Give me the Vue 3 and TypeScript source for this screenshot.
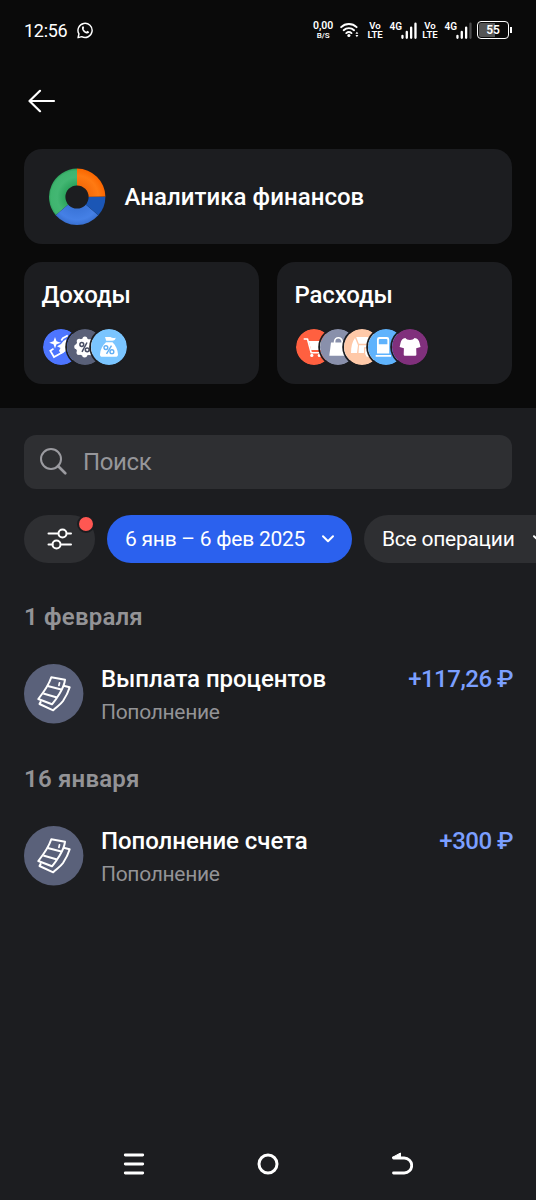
<script setup lang="ts">
interface Operation {
  date: string
  title: string
  kind: string
  amount: string
}

const operations: Operation[] = [
  { date: '1 февраля', title: 'Выплата процентов', kind: 'Пополнение', amount: '+117,26 ₽' },
  { date: '16 января', title: 'Пополнение счета', kind: 'Пополнение', amount: '+300 ₽' },
]
</script>

<template>
  <div class="screen">
    <div class="top">
      <div class="status">
        <span class="clock">12:56</span>
        <svg class="whatsapp" width="17" height="17" viewBox="0 0 16 16">
          <path d="M1 15l.9-3.6A6.9 6.9 0 1 1 4.600 14z" fill="none" stroke="#fff" stroke-width="1.400" stroke-linejoin="round" />
          <path d="M5.300 4.200c.5-.4 1-.3 1.200.2l.5 1.200-.7 1c.6 1.200 1.500 2 2.800 2.600l1-.9 1.500.8c.3.3.1 1-.3 1.400-1 .9-2.700.5-4.500-.8C5 8.300 4.200 5.500 5.300 4.200z" fill="#fff" />
        </svg>
        <div class="rate"><b>0,00</b><i>B/S</i></div>
        <svg class="wifi" width="20" height="16" viewBox="0 0 20 16">
          <g fill="none" stroke="#fff" stroke-width="2" stroke-linecap="round">
            <path d="M1.200 5a11.600 11.600 0 0 1 16 0" />
            <path d="M3.800 8.200a7.800 7.800 0 0 1 10.800 0" />
            <path d="M6.500 11.200a4 4 0 0 1 5.400 0" />
          </g>
          <circle cx="9.200" cy="13.700" r="1.600" fill="#fff" />
          <path d="M16 12l1.500-2.300L19 12zM16 13.200l1.500 2.300 1.500-2.300z" fill="#fff" />
        </svg>
        <div class="volte"><span>Vo</span><span>LTE</span></div>
        <span class="net">4G</span>
        <svg class="bars" width="17" height="17" viewBox="0 0 17 17">
          <path d="M1.500 14v2M6 10v6M10.500 5.500v10.500M15 1.500v14.500" stroke="#fff" stroke-width="2.400" stroke-linecap="round" />
        </svg>
        <div class="volte second"><span>Vo</span><span>LTE</span></div>
        <span class="net">4G</span>
        <svg class="bars" width="17" height="17" viewBox="0 0 17 17">
          <path d="M1.500 14v2M6 10v6M10.500 5.500v10.500" stroke="#fff" stroke-width="2.400" stroke-linecap="round" />
          <path d="M15 1.500v14.500" stroke="#4a4a4b" stroke-width="2.400" stroke-linecap="round" />
        </svg>
        <div class="battery"><span>55</span></div>
        <div class="battery-tip"></div>
      </div>

      <div class="nav">
        <svg width="28" height="24" viewBox="0 0 28 24">
          <path d="M26 12H1.500M12 1.800L1.500 12 12 22.200" fill="none" stroke="#fff" stroke-width="2.200" stroke-linecap="round" stroke-linejoin="round" />
        </svg>
      </div>

      <div class="card analytics">
        <svg width="58" height="58" viewBox="-29 -29 58 58">
          <defs>
            <radialGradient id="gGreen" gradientUnits="userSpaceOnUse" cx="0" cy="0" r="28.400">
              <stop offset=".4" stop-color="#2ba35c" /><stop offset=".7" stop-color="#43b773" /><stop offset=".92" stop-color="#3fb56f" /><stop offset="1" stop-color="#2a9c58" />
            </radialGradient>
            <radialGradient id="gBlue" gradientUnits="userSpaceOnUse" cx="0" cy="0" r="28.400">
              <stop offset=".4" stop-color="#3a74d8" /><stop offset=".8" stop-color="#4580e6" /><stop offset="1" stop-color="#386fd0" />
            </radialGradient>
            <radialGradient id="gOrange" gradientUnits="userSpaceOnUse" cx="0" cy="0" r="28.400">
              <stop offset=".4" stop-color="#f56a0a" /><stop offset=".75" stop-color="#ff7a12" /><stop offset="1" stop-color="#fa6600" />
            </radialGradient>
          </defs>
          <path d="M0 0V-28.400A28.400 28.400 0 0 0 -21.300 18.300z" fill="url(#gGreen)" />
          <path d="M0 0L-21.300 18.300A28.400 28.400 0 0 0 21.300 18.300z" fill="url(#gBlue)" />
          <path d="M0 0L21.300 18.300A28.400 28.400 0 0 0 28.400 -.6z" fill="#1b56b5" />
          <path d="M0 0L28.400 -.6A28.400 28.400 0 0 0 0 -28.400z" fill="url(#gOrange)" />
          <circle r="11.600" fill="#1c1d20" />
        </svg>
        <span>Аналитика финансов</span>
      </div>

      <div class="pair">
        <div class="card half">
          <h2>Доходы</h2>
          <div class="stack">
            <svg class="badge" viewBox="0 0 36 36">
              <circle cx="18" cy="18" r="18" fill="#4d75ff" />
              <path d="M12 8l1.500 4.200 4.500 1.500-4.500 1.500L12 19.500l-1.500-4.300L6.200 13.700l4.300-1.500z" fill="#fff" />
              <path d="M10.500 19.700l-3.200 2L11 28l9.500-5.200" fill="none" stroke="#fff" stroke-width="1.700" />
              <path d="M18.300 11.500l1.500-2.300 5-2.700" fill="none" stroke="#fff" stroke-width="1.700" />
              <path d="M20.500 12l3-2v11.700l-5.500 3.300-2-3.300 1.500-2.700-3.500-1.700 4-2.300z" fill="#fff" />
            </svg>
            <svg class="badge" viewBox="0 0 36 36">
              <circle cx="18" cy="18" r="18" fill="#596078" />
              <circle cx="17.700" cy="18" r="8.800" fill="#fff" />
              <circle cx="17.700" cy="18" r="7.960" fill="none" stroke="#fff" stroke-width="5" stroke-linecap="round" stroke-dasharray="0 6.251" />
              <g fill="none" stroke="#484e64" stroke-width="1.500"><circle cx="14.800" cy="15.500" r="1.900" /><circle cx="20.200" cy="20.800" r="1.900" /><path d="M20 13.500l-5 9.300" /></g>
            </svg>
            <svg class="badge" viewBox="0 0 36 36">
              <circle cx="18" cy="18" r="18" fill="#7ac5ff" />
              <path d="M14 8h5.500q2 1.700 5.200.7-.5 2.800-3.500 3.100h-6zM15 13.200h6.500c3.200 3.200 5.300 7.300 5.500 12.300 0 1.500-1 2.300-2.400 2.300H11.200c-1.400 0-2.300-1-2.200-2.400.2-5 2.600-9 6-12.200z" fill="#fff" />
              <g fill="none" stroke="#62aef2" stroke-width="1.400"><circle cx="14.900" cy="18.600" r="1.900" /><circle cx="20.900" cy="22.700" r="1.900" /><path d="M20.500 16.700l-5 8.200" /></g>
            </svg>
          </div>
        </div>
        <div class="card half">
          <h2>Расходы</h2>
          <div class="stack">
            <svg class="badge" viewBox="0 0 36 36">
              <circle cx="18" cy="18" r="18" fill="#ff6040" />
              <path d="M8.300 10h3.200l3.700 13.700h10" fill="none" stroke="#fff" stroke-width="1.600" stroke-linecap="round" stroke-linejoin="round" />
              <path d="M12.700 12h16l-2.600 9H15.200z" fill="#fff" />
              <circle cx="15.800" cy="26.400" r="1.600" fill="#fff" /><circle cx="23.300" cy="26.400" r="1.600" fill="#fff" />
            </svg>
            <svg class="badge" viewBox="0 0 36 36">
              <circle cx="18" cy="18" r="18" fill="#8990ab" />
              <path d="M11 13.500h14.500l1.600 13.200H9.300z" fill="#fff" />
              <path d="M14.600 15v-2.500a3.800 3.800 0 0 1 7.600 0V15" fill="none" stroke="#fff" stroke-width="1.600" />
            </svg>
            <svg class="badge" viewBox="0 0 36 36">
              <circle cx="18" cy="18" r="18" fill="#ffc9a8" />
              <path d="M12.200 8H24l2.500 6.800H14.800zM11 9l3 7.300-1 7.700H7c0-6 1.200-11.500 4-15zM15 16.200h11.500v2H20V24h-5.500zM21.200 19.500h5.500v8.200h-4L21.200 25z" fill="#fff" />
            </svg>
            <svg class="badge" viewBox="0 0 36 36">
              <circle cx="18" cy="18" r="18" fill="#5fb3fd" />
              <path fill-rule="evenodd" d="M11.200 8h7.800a2.200 2.200 0 0 1 2.200 2.200V24.500H9V10.200A2.200 2.200 0 0 1 11.200 8zM11.800 10a1 1 0 0 0-1 1v4.200h8.600V11a1 1 0 0 0-1-1z" fill="#fff" />
              <path d="M7.700 25.900h15.300v1.900H7.700z" fill="#fff" />
            </svg>
            <svg class="badge" viewBox="0 0 36 36">
              <circle cx="18" cy="18" r="18" fill="#80307c" />
              <path d="M13.400 9c1.200 2.500 7.900 2.500 9.100 0 3 .5 4.400 2.200 5 4.700l1 4.300-4.300 1.300.2 6.300q0 1.200-1.200 1.200H12.900q-1.200 0-1.200-1.200l.2-6.300L7.600 18l1-4.300c.6-2.500 1.900-4.200 4.800-4.700z" fill="#fff" />
            </svg>
          </div>
        </div>
      </div>
    </div>

    <div class="search">
      <svg width="30" height="30" viewBox="0 0 30 30">
        <circle cx="12" cy="12" r="10" fill="none" stroke="#9b9ba0" stroke-width="2" />
        <path d="M19 19l7.300 7.300" stroke="#9b9ba0" stroke-width="2.700" stroke-linecap="round" />
      </svg>
      <span>Поиск</span>
    </div>

    <div class="chips">
      <div class="chip filter">
        <svg width="26" height="24" viewBox="0 0 26 24">
          <g fill="none" stroke="#fff" stroke-width="2" stroke-linecap="round">
            <path d="M1.500 6.500h9M20 6.500h4M1.500 17.500h4M14.500 17.500H24" />
            <circle cx="15.500" cy="6.500" r="4" /><circle cx="9.500" cy="17.500" r="4" />
          </g>
        </svg>
        <i class="dot"></i>
      </div>
      <div class="chip active">
        <span>6 янв – 6 фев 2025</span>
        <svg width="14" height="10" viewBox="0 0 14 10"><path d="M2 2.200l5 5 5-5" fill="none" stroke="#fff" stroke-width="2" stroke-linecap="round" stroke-linejoin="round" /></svg>
      </div>
      <div class="chip kinds">
        <span>Все операции</span>
        <svg width="14" height="10" viewBox="0 0 14 10"><path d="M2 2.200l5 5 5-5" fill="none" stroke="#fff" stroke-width="2" stroke-linecap="round" stroke-linejoin="round" /></svg>
      </div>
    </div>

    <section v-for="op in operations" :key="op.date" class="group">
      <h3>{{ op.date }}</h3>
      <div class="row">
        <svg width="60" height="60" viewBox="0 0 60 60">
          <circle cx="29.700" cy="29.700" r="29.700" fill="#5a617a" />
          <g fill="none" stroke="#fff" stroke-width="2" stroke-linejoin="round">
            <path d="M27.300 13.300l13.700 2.500c-.6 4.700-2.700 9.200-5.500 14-2.500 4.200-4.700 7.200-7.500 10.500L14.300 35c5.200-6.500 10-12.700 13-21.700z" />
            <path d="M23.700 22l13.500 3.500M19.300 29.500l13.700 4" />
            <path d="M39.500 21.700l6.200 1.500c-1.500 5-3.700 9.300-6.700 13.800-3 4.200-6.500 6-9.800 9.300L15.500 40l1.500-2.800" />
          </g>
          <path d="M35.500 18.800l-.6 2.700" stroke="#fff" stroke-width="1.700" stroke-linecap="round" />
        </svg>
        <div class="info">
          <div class="line">
            <span class="name">{{ op.title }}</span>
            <span class="amount">{{ op.amount }}</span>
          </div>
          <div class="kind">{{ op.kind }}</div>
        </div>
      </div>
    </section>

    <div class="sysnav">
      <svg width="22" height="24" viewBox="0 0 22 24"><path d="M2.300 3h17.400M2.300 12h17.400M2.300 21h17.400" stroke="#fff" stroke-width="2.900" stroke-linecap="round" /></svg>
      <svg width="24" height="24" viewBox="0 0 24 24"><circle cx="12" cy="12" r="9" fill="none" stroke="#fff" stroke-width="3" /></svg>
      <svg width="22" height="24" viewBox="0 0 22 24">
        <path d="M2.500 6h10.700a7.500 7.500 0 0 1 0 15H2.500" fill="none" stroke="#fff" stroke-width="2.800" stroke-linecap="round" />
        <path d="M1.200 5.500L9.500 1v5z" fill="#fff" stroke="#fff" stroke-linejoin="round" />
      </svg>
    </div>
  </div>
</template>

<style>
body {
  background: #1c1d20;
}
</style>

<style scoped>
.screen {
  width: 536px;
  height: 1200px;
  display: flex;
  flex-direction: column;
  overflow: hidden;
  background: #1c1d20;
  color: #fff;
  font-family: Roboto, "Noto Sans", sans-serif;
}
.top {
  box-sizing: border-box;
  height: 408px;
  padding: 0 24px;
  background: #0a0a0a;
  flex: none;
}
.status {
  height: 60px;
  display: flex;
  align-items: center;
}
.clock {
  width: 54px;
  font-size: 18px;
  letter-spacing: -0.300px;
}
.whatsapp {
  margin-left: 1px;
}
.rate {
  width: 22px;
  margin-left: 219px;
  display: flex;
  flex-direction: column;
  align-items: center;
  font-size: 10.500px;
  line-height: 10px;
}
.rate b {
  font-weight: 600;
}
.rate i {
  font-style: normal;
  font-weight: 600;
  font-size: 8px;
  line-height: 9px;
}
.wifi {
  margin-left: 6px;
}
.volte {
  width: 15px;
  margin-left: 8.500px;
  display: flex;
  flex-direction: column;
  align-items: center;
  font-size: 9.600px;
  line-height: 9px;
  font-weight: 600;
}
.volte.second {
  margin-left: 5px;
}
.net {
  width: 13px;
  margin: -8px 0 0 7px;
  font-size: 10px;
  font-weight: 600;
}
.bars {
  margin-left: -1px;
}
.battery {
  box-sizing: border-box;
  width: 32px;
  height: 18px;
  margin-left: 4.500px;
  flex: none;
  border: 1.500px solid #fff;
  border-radius: 4px;
  background: linear-gradient(90deg, #555 55%, #0a0a0a 55%);
  background-clip: content-box;
  padding: 1px;
  display: flex;
  align-items: center;
  justify-content: center;
  font-size: 12px;
  font-weight: 600;
}
.battery-tip {
  width: 2px;
  height: 6px;
  margin-left: 1px;
  flex: none;
  background: #fff;
}
.nav {
  height: 89px;
  padding: 29px 0 0 4px;
  box-sizing: border-box;
}
.nav svg,
.stack svg {
  display: block;
}
.card {
  background: #1c1d20;
  border-radius: 18px;
}
.analytics {
  height: 95px;
  display: flex;
  align-items: center;
  padding-left: 24px;
}
.analytics span {
  margin-left: 18.500px;
  font-size: 24px;
  font-weight: 500;
  letter-spacing: 0.050px;
}
.pair {
  margin-top: 18px;
  display: grid;
  grid-template-columns: 1fr 1fr;
  gap: 18px;
}
.half {
  height: 122px;
}
h2 {
  margin: 18px 0 0 17.500px;
  font-size: 24px;
  line-height: 30px;
  font-weight: 500;
  letter-spacing: -0.150px;
}
.stack {
  display: flex;
  margin: 18.500px 0 0 19px;
}
.badge {
  width: 36px;
  height: 36px;
  margin-right: -12.100px;
  border-radius: 50%;
  box-shadow: 0 0 0 1.800px #1c1d20;
}
.search {
  box-sizing: border-box;
  flex: none;
  height: 54px;
  margin: 26.500px 24px 0;
  padding: 0 0 0 15px;
  border-radius: 12px;
  background: #2e2f32;
  display: flex;
  align-items: center;
  color: #96969a;
  font-size: 24px;
  letter-spacing: -0.350px;
}
.search span {
  margin-left: 14px;
}
.chips {
  flex: none;
  width: 560px;
  margin: 26.500px 0 0 24px;
  display: flex;
  gap: 12px;
}
.chip {
  box-sizing: border-box;
  height: 48px;
  border-radius: 24px;
  background: #2e2f32;
  display: flex;
  align-items: center;
  font-size: 21px;
  letter-spacing: -0.250px;
  white-space: nowrap;
}
.filter {
  width: 71px;
  justify-content: center;
  position: relative;
}
.dot {
  position: absolute;
  right: 0;
  top: 0;
  width: 14px;
  height: 14px;
  border: 2px solid #1c1d20;
  border-radius: 50%;
  background: #ff5752;
}
.active {
  width: 245px;
  padding: 0 17px 0 18px;
  justify-content: space-between;
  background: #2b61ee;
}
.kinds {
  width: 210px;
  padding: 0 28px 0 18px;
  justify-content: space-between;
}
.group {
  box-sizing: border-box;
  flex: none;
  height: 161.500px;
}
h3 {
  margin: 38px 0 0 24px;
  height: 32px;
  line-height: 32px;
  font-size: 24px;
  font-weight: 600;
  letter-spacing: 0.200px;
  color: #939396;
}
.row {
  display: flex;
  margin: 31px 23px 0 24px;
}
.row svg {
  flex: none;
}
.info {
  flex: 1;
  margin-left: 17px;
}
.line {
  display: flex;
  justify-content: space-between;
  line-height: 30px;
  font-size: 24px;
  white-space: nowrap;
}
.name {
  font-weight: 500;
  letter-spacing: -0.050px;
}
.amount {
  color: #7b9fff;
  font-weight: 500;
  letter-spacing: -0.500px;
}
.kind {
  margin-top: 5px;
  font-size: 21px;
  line-height: 26px;
  letter-spacing: -0.300px;
  color: #939396;
}
.sysnav {
  margin-top: auto;
  height: 72px;
  padding: 0 123px;
  display: flex;
  align-items: center;
  justify-content: space-between;
}
</style>
